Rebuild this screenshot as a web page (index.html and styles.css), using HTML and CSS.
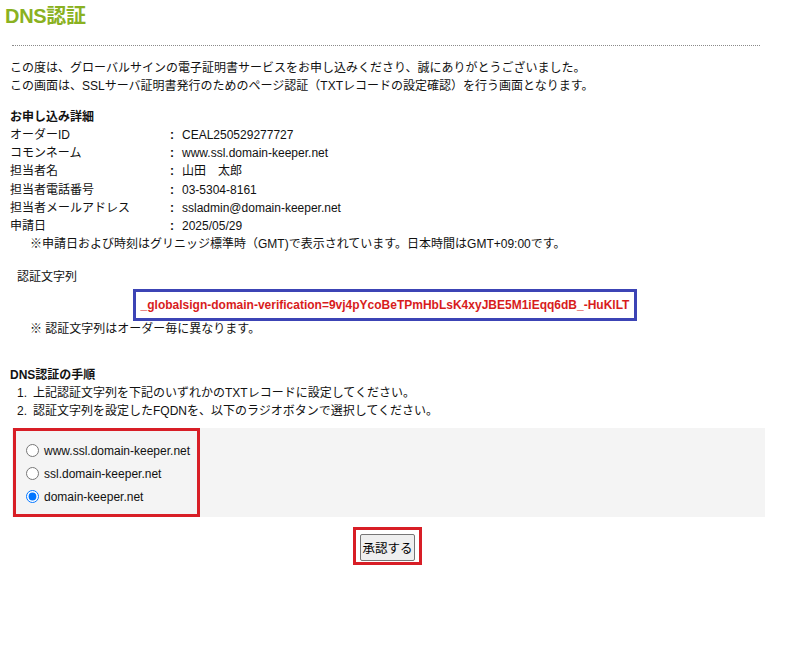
FILE: index.html
```html
<!DOCTYPE html>
<html lang="ja">
<head>
<meta charset="utf-8">
<title>DNS認証</title>
<link rel="stylesheet" href="styles.css">
</head>
<body>
<div class="page">
  <h1 class="title">DNS認証</h1>
  <hr class="rule">
  <p class="intro">この度は、グローバルサインの電子証明書サービスをお申し込みくださり、誠にありがとうございました。<br>この画面は、SSLサーバ証明書発行のためのページ認証（TXTレコードの設定確認）を行う画面となります。</p>

  <div class="details">
    <div class="sec-title">お申し込み詳細</div>
    <div class="row"><span class="label">オーダーID</span><span class="colon">:</span><span>CEAL250529277727</span></div>
    <div class="row"><span class="label">コモンネーム</span><span class="colon">:</span><span>www.ssl.domain-keeper.net</span></div>
    <div class="row"><span class="label">担当者名</span><span class="colon">:</span><span>山田　太郎</span></div>
    <div class="row"><span class="label">担当者電話番号</span><span class="colon">:</span><span>03-5304-8161</span></div>
    <div class="row"><span class="label">担当者メールアドレス</span><span class="colon">:</span><span>ssladmin@domain-keeper.net</span></div>
    <div class="row"><span class="label">申請日</span><span class="colon">:</span><span>2025/05/29</span></div>
    <div class="note-gmt">※申請日および時刻はグリニッジ標準時（GMT)で表示されています。日本時間はGMT+09:00です。</div>
  </div>

  <div class="auth">
    <div class="auth-label">認証文字列</div>
    <div class="auth-box">_globalsign-domain-verification=9vj4pYcoBeTPmHbLsK4xyJBE5M1iEqq6dB_-HuKlLT</div>
    <div class="auth-note">※ 認証文字列はオーダー毎に異なります。</div>
  </div>

  <div class="steps">
    <div class="sec-title">DNS認証の手順</div>
    <ol class="step-list">
      <li><span class="num">1.</span>上記認証文字列を下記のいずれかのTXTレコードに設定してください。</li>
      <li><span class="num">2.</span>認証文字列を設定したFQDNを、以下のラジオボタンで選択してください。</li>
    </ol>
  </div>

  <div class="choice-area">
    <div class="choices">
      <label class="choice"><input type="radio" name="fqdn"><span>www.ssl.domain-keeper.net</span></label>
      <label class="choice"><input type="radio" name="fqdn"><span>ssl.domain-keeper.net</span></label>
      <label class="choice"><input type="radio" name="fqdn" checked><span>domain-keeper.net</span></label>
    </div>
  </div>

  <div class="submit-wrap">
    <div class="submit-frame"><button type="button" class="submit">承認する</button></div>
  </div>
</div>
</body>
</html>
```
FILE: styles.css
```css
html, body {
  margin: 0;
  padding: 0;
  background: #ffffff;
}
body {
  font-family: "Liberation Sans", "Noto Sans CJK JP", sans-serif;
  font-size: 12px;
  color: #111;
}
.page {
  width: 785px;
}
.title {
  margin: 0;
  padding: 4px 0 0 5px;
  font-size: 20px;
  line-height: 24px;
  font-weight: bold;
  color: #8ab121;
  letter-spacing: -0.3px;
}
.rule {
  margin: 17px 25px 0 12px;
  border: 0;
  border-top: 1px dotted #8a8a8a;
  height: 0;
}
.intro {
  margin: 13px 0 0 10px;
  line-height: 18px;
}
.details {
  margin: 13px 0 0 10px;
}
.sec-title {
  font-weight: bold;
  line-height: 18px;
}
.row {
  display: flex;
  line-height: 18.2px;
}
.label {
  width: 160px;
}
.colon {
  width: 12px;
  font-weight: bold;
}
.note-gmt {
  padding-left: 20px;
  line-height: 18px;
}
.auth {
  margin-top: 15px;
}
.auth-label {
  margin-left: 17px;
  line-height: 18px;
}
.auth-box {
  margin: 3px 0 0 133px;
  width: 498px;
  height: 26px;
  border: 3px solid #3c44b5;
  color: #d81c1c;
  font-weight: bold;
  text-align: center;
  line-height: 26px;
  font-size: 12px;
}
.auth-note {
  margin-left: 30px;
  line-height: 16px;
}
.steps {
  margin: 29px 0 0 10px;
}
.step-list {
  list-style: none;
  margin: 0;
  padding: 0 0 0 7px;
}
.step-list li {
  line-height: 18px;
}
.num {
  display: inline-block;
  width: 16px;
}
.choice-area {
  margin: 8px 0 0 12px;
  width: 753px;
  height: 89px;
  background: #f4f4f4;
}
.choices {
  margin-left: 1px;
  width: 181px;
  height: 81px;
  border: 3px solid #d81e26;
  padding-top: 2px;
  display: flex;
  flex-direction: column;
  justify-content: center;
  gap: 5px;
}
.choice {
  display: flex;
  align-items: center;
  height: 18px;
  font-size: 12px;
}
.choice input {
  margin: 0 5px 0 10px;
  width: 13px;
  height: 13px;
}
.submit-wrap {
  width: 753px;
  margin: 10px 0 0 12px;
  display: flex;
  justify-content: center;
}
.submit-frame {
  border: 3px solid #d81e26;
  padding: 4px 4px 1px 4px;
  margin-right: 2px;
  display: flex;
}
.submit {
  font-family: "Liberation Sans", "Noto Sans CJK JP", sans-serif;
  font-size: 12.5px;
  padding: 0 1px;
  background: #efefef;
  border: 1px solid #767676;
  border-radius: 2px;
  color: #000;
  height: 27px;
  white-space: nowrap;
}
```
